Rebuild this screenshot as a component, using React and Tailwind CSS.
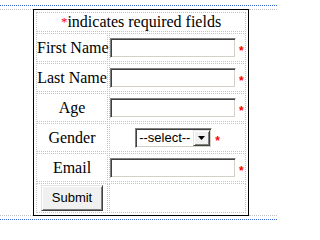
import React from "react";

// Classic 3D edges used by the inputs and buttons
const inset =
  "border border-t-[#808080] border-l-[#808080] border-b-white border-r-white shadow-[inset_1px_1px_0_#404040,inset_-1px_-1px_0_#d4d0c8]";
const outset =
  "border border-t-[#e3e3e3] border-l-[#e3e3e3] border-b-[#404040] border-r-[#404040] shadow-[inset_1px_1px_0_#ffffff,inset_-1px_-1px_0_#808080] bg-[#f0f0f0]";

function Star() {
  return (
    <span className="ml-[3px] mt-[7px] text-[12px] leading-[12px] font-bold text-[#ff0000] font-['Liberation_Sans',sans-serif]">
      *
    </span>
  );
}

function TextRow({ label }) {
  return (
    <tr>
      <td className="h-[29px] w-[72px] p-0 border border-dotted border-[#c4c4c4] text-center align-middle whitespace-nowrap">
        {label}
      </td>
      <td className="h-[29px] p-0 border border-dotted border-[#c4c4c4] align-middle">
        <div className="flex items-center">
          <div className={`w-[126px] h-[20px] bg-white ${inset}`} />
          <Star />
        </div>
      </td>
    </tr>
  );
}

export default function App() {
  return (
    <div className="w-[277px] h-[238px] bg-white pt-[5px] text-black font-['Liberation_Serif',serif] text-[16px]">
      <div className="border-y border-dotted border-[#3366cc] py-[3px]">
        <div className="flex">
          <div className="w-[33px] border-y border-dotted border-[#c0c0c0]" />
          <div className="w-[216px] border border-black p-px">
            <table className="w-full table-fixed border-separate border-spacing-[1px]">
              <colgroup>
                <col className="w-[72px]" />
                <col />
              </colgroup>
              <tbody>
                <tr>
                  <td
                    colSpan={2}
                    className="h-[20px] p-0 border border-dotted border-[#c4c4c4] text-center align-middle leading-[18px]"
                  >
                    <span className="text-[#ff0000] text-[13px] align-top">*</span>
                    indicates required fields
                  </td>
                </tr>
                <TextRow label="First Name" />
                <TextRow label="Last Name" />
                <TextRow label="Age" />
                <tr>
                  <td className="h-[29px] p-0 border border-dotted border-[#c4c4c4] text-center align-middle">
                    Gender
                  </td>
                  <td className="h-[29px] p-0 border border-dotted border-[#c4c4c4] align-middle">
                    <div className="flex items-center justify-center">
                      <div
                        className={`w-[77px] h-[20px] bg-white flex items-center justify-between pl-[3px] pr-px ${inset}`}
                      >
                        <span className="text-[13px] leading-[16px] font-['Liberation_Sans',sans-serif]">
                          --select--
                        </span>
                        <div className={`w-[17px] h-[16px] flex items-center justify-center ${outset}`}>
                          <svg width="7" height="4" viewBox="0 0 7 4">
                            <path d="M0 0h7L3.5 4z" fill="#000" />
                          </svg>
                        </div>
                      </div>
                      <Star />
                    </div>
                  </td>
                </tr>
                <TextRow label="Email" />
                <tr>
                  <td className="h-[30px] p-0 border border-dotted border-[#c4c4c4] text-center align-middle">
                    <button
                      type="button"
                      className={`w-[62px] h-[26px] text-[13px] font-['Liberation_Sans',sans-serif] text-black ${outset}`}
                    >
                      Submit
                    </button>
                  </td>
                  <td className="h-[30px] p-0 border border-dotted border-[#c4c4c4]" />
                </tr>
              </tbody>
            </table>
          </div>
          <div className="flex-1 border-y border-dotted border-[#c0c0c0]" />
        </div>
      </div>
    </div>
  );
}
